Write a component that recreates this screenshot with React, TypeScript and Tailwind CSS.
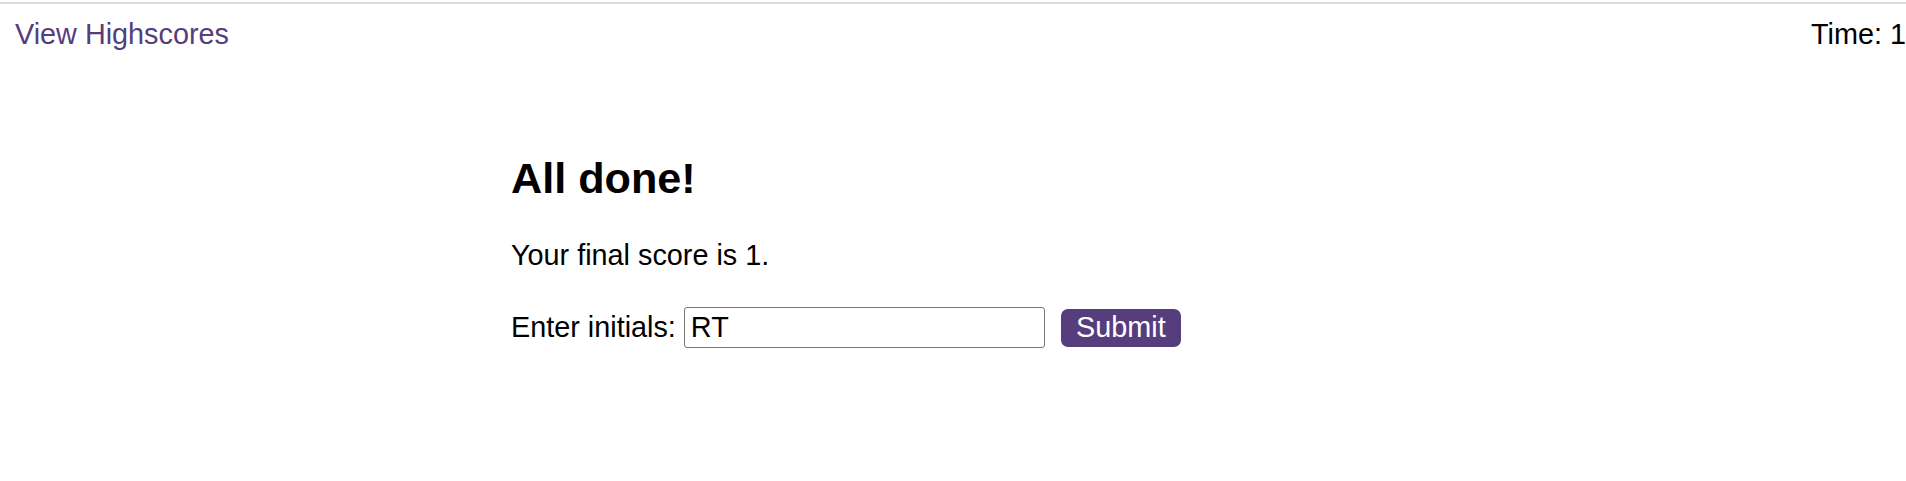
import { useState } from "react";

export default function App() {
  const [initials, setInitials] = useState("RT");

  return (
    <div className="min-h-[481px] bg-white pt-[2px] font-['Liberation_Sans',Arial,sans-serif] text-black">
      <div className="h-[2px] bg-[#dddddd]" />

      <header className="flex items-start justify-between pl-[15px] pt-[14px] text-[28.8px] leading-[33px]">
        <a href="#" className="text-[#563d7c] no-underline">
          View Highscores
        </a>
        <div>Time: 1</div>
      </header>

      <main className="mx-auto w-[884px] pt-[102px]">
        <h2 className="text-[43.2px] font-bold leading-[50px]">All done!</h2>
        <p className="mt-[36px] text-[28.8px] leading-[33px]">Your final score is 1.</p>

        <form
          className="mt-[35px] flex items-center text-[28.8px]"
          onSubmit={(e) => e.preventDefault()}
        >
          <label htmlFor="initials" className="leading-[33px]">
            Enter initials:
          </label>
          <input
            id="initials"
            value={initials}
            onChange={(e) => setInitials(e.target.value)}
            className="ml-[8px] h-[41px] w-[361px] rounded-[3px] border border-[#767676] px-[6px] text-[28.8px] leading-[33px] outline-none"
          />
          <button
            type="submit"
            className="ml-[16px] h-[38px] w-[120px] rounded-[7px] bg-[#563d7c] text-[28.8px] leading-[33px] text-white"
          >
            Submit
          </button>
        </form>
      </main>
    </div>
  );
}
